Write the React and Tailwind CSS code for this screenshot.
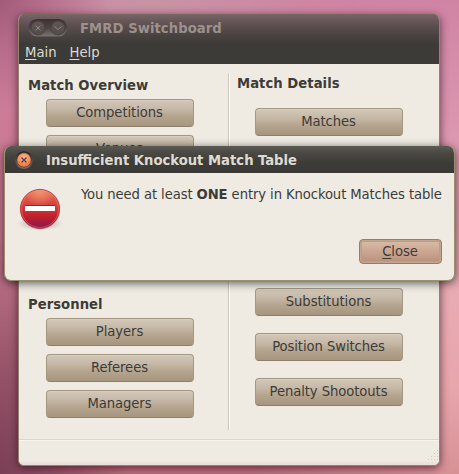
import React from "react";

function BeigeButton({ label }) {
  return (
    <button className="flex h-7 w-[148px] shrink-0 items-center justify-center rounded-[4px] border border-[#a39782] border-b-[#8e7f6b] bg-[linear-gradient(180deg,#d3c7b8_0%,#c5b8a7_35%,#b5a58f_62%,#a6967f_100%)] pr-px pb-[2px] whitespace-nowrap shadow-[inset_0_1px_0_#d9cec1]">
      {label}
    </button>
  );
}

function Heading({ children }) {
  return <h2 className="h-5 font-bold leading-5 tracking-[0.04px] whitespace-nowrap">{children}</h2>;
}

function WindowControls() {
  return (
    <svg width="42" height="20" viewBox="0 0 42 20" className="shrink-0">
      <defs>
        <linearGradient id="pill" x1="0" y1="0" x2="0" y2="1">
          <stop offset="0" stopColor="#3d3033" />
          <stop offset=".5" stopColor="#4d4445" />
          <stop offset="1" stopColor="#7a7473" />
        </linearGradient>
        <linearGradient id="knob" x1="0" y1="0" x2="0" y2="1">
          <stop offset="0" stopColor="#625657" />
          <stop offset="1" stopColor="#514b49" />
        </linearGradient>
      </defs>
      <rect x="1.3" y="1" width="39" height="17.6" rx="8.8" fill="url(#pill)" />
      <circle cx="11" cy="10" r="7" fill="url(#knob)" stroke="#413b3a" strokeWidth=".7" />
      <circle cx="31" cy="10" r="7" fill="url(#knob)" stroke="#413b3a" strokeWidth=".7" />
      <path d="M8.5 7.5l5 5M13.5 7.5l-5 5M27.5 8.5L31 11.5l3.5-3" fill="none" stroke="#8f8682" strokeWidth="1" />
    </svg>
  );
}

function CloseKnob() {
  return (
    <svg width="20" height="20" viewBox="0 0 20 20" className="shrink-0">
      <defs>
        <radialGradient id="orange" cx=".5" cy=".35" r=".65">
          <stop offset="0" stopColor="#f8bda0" />
          <stop offset=".55" stopColor="#f5905f" />
          <stop offset="1" stopColor="#f06f37" />
        </radialGradient>
        <linearGradient id="ring" x1="0" y1="0" x2="0" y2="1">
          <stop offset="0" stopColor="#20201e" />
          <stop offset="1" stopColor="#7b7a74" />
        </linearGradient>
      </defs>
      <circle cx="10" cy="10" r="8.8" fill="url(#ring)" />
      <circle cx="10" cy="10" r="7.2" fill="url(#orange)" stroke="#592f20" strokeWidth=".6" />
      <path d="M7.5 7.5l5 5M12.5 7.5l-5 5" stroke="#51443a" strokeWidth="1.3" />
    </svg>
  );
}

function StopIcon() {
  return (
    <svg width="48" height="48" viewBox="0 0 48 48" className="shrink-0">
      <defs>
        <linearGradient id="stop" x1="0" y1="0" x2="0" y2="1">
          <stop offset="0" stopColor="#e5795a" />
          <stop offset=".3" stopColor="#dd4b43" />
          <stop offset=".68" stopColor="#c4202a" />
          <stop offset="1" stopColor="#85164e" />
        </linearGradient>
        <radialGradient id="floor">
          <stop offset="0" stopColor="#000" stopOpacity=".3" />
          <stop offset="1" stopColor="#000" stopOpacity="0" />
        </radialGradient>
        <radialGradient id="glow" cx=".5" cy=".05" r=".4">
          <stop offset="0" stopColor="#f3a77c" stopOpacity=".65" />
          <stop offset="1" stopColor="#f3a77c" stopOpacity="0" />
        </radialGradient>
      </defs>
      <ellipse cx="24" cy="38.5" rx="23" ry="7" fill="url(#floor)" />
      <circle cx="24" cy="24" r="19.6" fill="url(#stop)" stroke="#b42531" strokeWidth=".8" />
      <circle cx="24" cy="24" r="19" fill="url(#glow)" />
      <circle cx="24" cy="24" r="18.5" fill="none" stroke="#f09080" strokeOpacity=".45" />
      <path d="M9 20.5h30" stroke="#a41e2b" />
      <rect x="9" y="21" width="30" height="5" fill="#fff" />
    </svg>
  );
}

function Grip() {
  return (
    <svg width="11" height="11" viewBox="0 0 11 11">
      {[[9, 0], [6, 3], [9, 3], [3, 6], [6, 6], [9, 6], [0, 9], [3, 9], [6, 9], [9, 9]].map(([x, y]) => (
        <rect key={`${x}-${y}`} x={x} y={y} width="1" height="1" fill="#d2cabb" />
      ))}
    </svg>
  );
}

function MainWindow() {
  return (
    <div className="flex h-[452px] w-[422px] flex-col overflow-hidden rounded-[6px] border border-t-0 border-[#94836f] bg-[#efebe3] shadow-[0_2px_9px_rgba(45,10,30,0.7)]">
      <header className="flex h-[50px] shrink-0 flex-col bg-[linear-gradient(180deg,#786467_0%,#5e4f51_22%,#494341_42%,#3c3b37_60%,#3c3b37_100%)] shadow-[inset_0_1px_0_#77695f]">
        <div className="flex h-7 items-center pl-2">
          <WindowControls />
          <h1 className="pl-[11px] font-bold tracking-[0.06px] text-[#9c918b]">FMRD Switchboard</h1>
        </div>
        <nav className="flex gap-[13px] pl-[6px] leading-5 tracking-normal text-[#dfdbd2]">
          <span><u className="underline-offset-[2px]">M</u>ain</span>
          <span><u className="underline-offset-[2px]">H</u>elp</span>
        </nav>
      </header>
      <main className="flex h-[375px] shrink-0 pt-[9px] pb-[9px]">
        <section className="flex w-[209px] shrink-0 flex-col pt-[2px] pl-[9px]">
          <Heading>Match Overview</Heading>
          <div className="mt-[4px] flex h-[195px] flex-col gap-2 pl-[18px]">
            <BeigeButton label="Competitions" />
            <BeigeButton label="Venues" />
          </div>
          <Heading>Personnel</Heading>
          <div className="mt-[4px] flex flex-col gap-2 pl-[18px]">
            <BeigeButton label="Players" />
            <BeigeButton label="Referees" />
            <BeigeButton label="Managers" />
          </div>
        </section>
        <div className="w-[2px] shrink-0 border-r border-l border-l-[#c9c5bd] border-r-white" />
        <section className="flex flex-col pl-[7px]">
          <Heading>Match Details</Heading>
          <div className="flex h-[195px] flex-col pt-[15px] pl-[18px]">
            <BeigeButton label="Matches" />
          </div>
          <div className="flex flex-col gap-[17px] pl-[18px]">
            <BeigeButton label="Substitutions" />
            <BeigeButton label="Position Switches" />
            <BeigeButton label="Penalty Shootouts" />
          </div>
        </section>
      </main>
      <footer className="flex flex-1 items-end justify-end border-t border-[#dcd6c6] bg-[linear-gradient(180deg,#efebe3_80%,#e9ddd5_100%)] pb-[4px] shadow-[inset_0_1px_0_#f7f5f0]">
        <Grip />
      </footer>
    </div>
  );
}

function Dialog() {
  return (
    <div className="absolute top-[146px] left-1 flex h-[135px] w-[451px] flex-col overflow-hidden rounded-[7px] border border-t-0 border-[#9b8e6c] bg-[#efebe3] shadow-[0_2px_10px_rgba(0,0,0,0.65)]">
      <header className="flex h-[27px] shrink-0 items-center bg-[linear-gradient(180deg,#5b5a53_0%,#4a4943_25%,#3d3c37_60%,#3a3935_100%)] pl-[9px] font-bold text-[#dfdbd2]">
        <CloseKnob />
        <h2 className="pl-3 tracking-normal whitespace-nowrap">Insufficient Knockout Match Table</h2>
      </header>
      <div className="flex h-[66px] pt-3 pl-[11px]">
        <StopIcon />
        <p className="-mt-px pl-[17px] leading-5 tracking-[-0.1px] whitespace-nowrap">
          You need at least <b>ONE</b> entry in Knockout Matches table
        </p>
      </div>
      <div className="flex justify-end pr-3">
        <button className="flex h-[25px] w-[83px] items-center justify-center rounded-[4px] border border-[#8f806c] bg-[linear-gradient(180deg,#dbbdaa_0%,#cca994_45%,#b88f78_100%)] pr-px pb-px shadow-[inset_0_0_0_1px_#c0a58f,inset_0_0_0_2px_#e88b74]">
          <u className="underline-offset-[2px]">C</u>lose
        </button>
      </div>
    </div>
  );
}

export default function App() {
  return (
    <div className="relative h-[474px] w-[459px] overflow-hidden bg-[radial-gradient(ellipse_130px_240px_at_0%_100%,#7a3f56_0%,#7a3f5699_45%,transparent_100%),radial-gradient(circle_at_0%_0%,#a35b7a_0%,transparent_110px),radial-gradient(ellipse_200px_60px_at_150px_0px,#c893a4_0%,transparent_100%),linear-gradient(180deg,#cf84a3_0%,#cb7892_35%,#c4778c_70%,#c06f7c_100%)] pt-[14px] pl-[18px] font-['DejaVu_Sans_Condensed','DejaVu_Sans',sans-serif] text-[14.67px] tracking-[-0.08px] text-[#3c3b37]">
      <div className="pointer-events-none absolute inset-0 bg-[linear-gradient(180deg,#cf84a3_0%,#dc97b0_28%,#e9abb3_62%,#e7a5ac_82%,#d69195_100%)] [mask-image:linear-gradient(90deg,transparent_55%,black_96%)]" />
      <div className="relative">
        <MainWindow />
      </div>
      <Dialog />
    </div>
  );
}
